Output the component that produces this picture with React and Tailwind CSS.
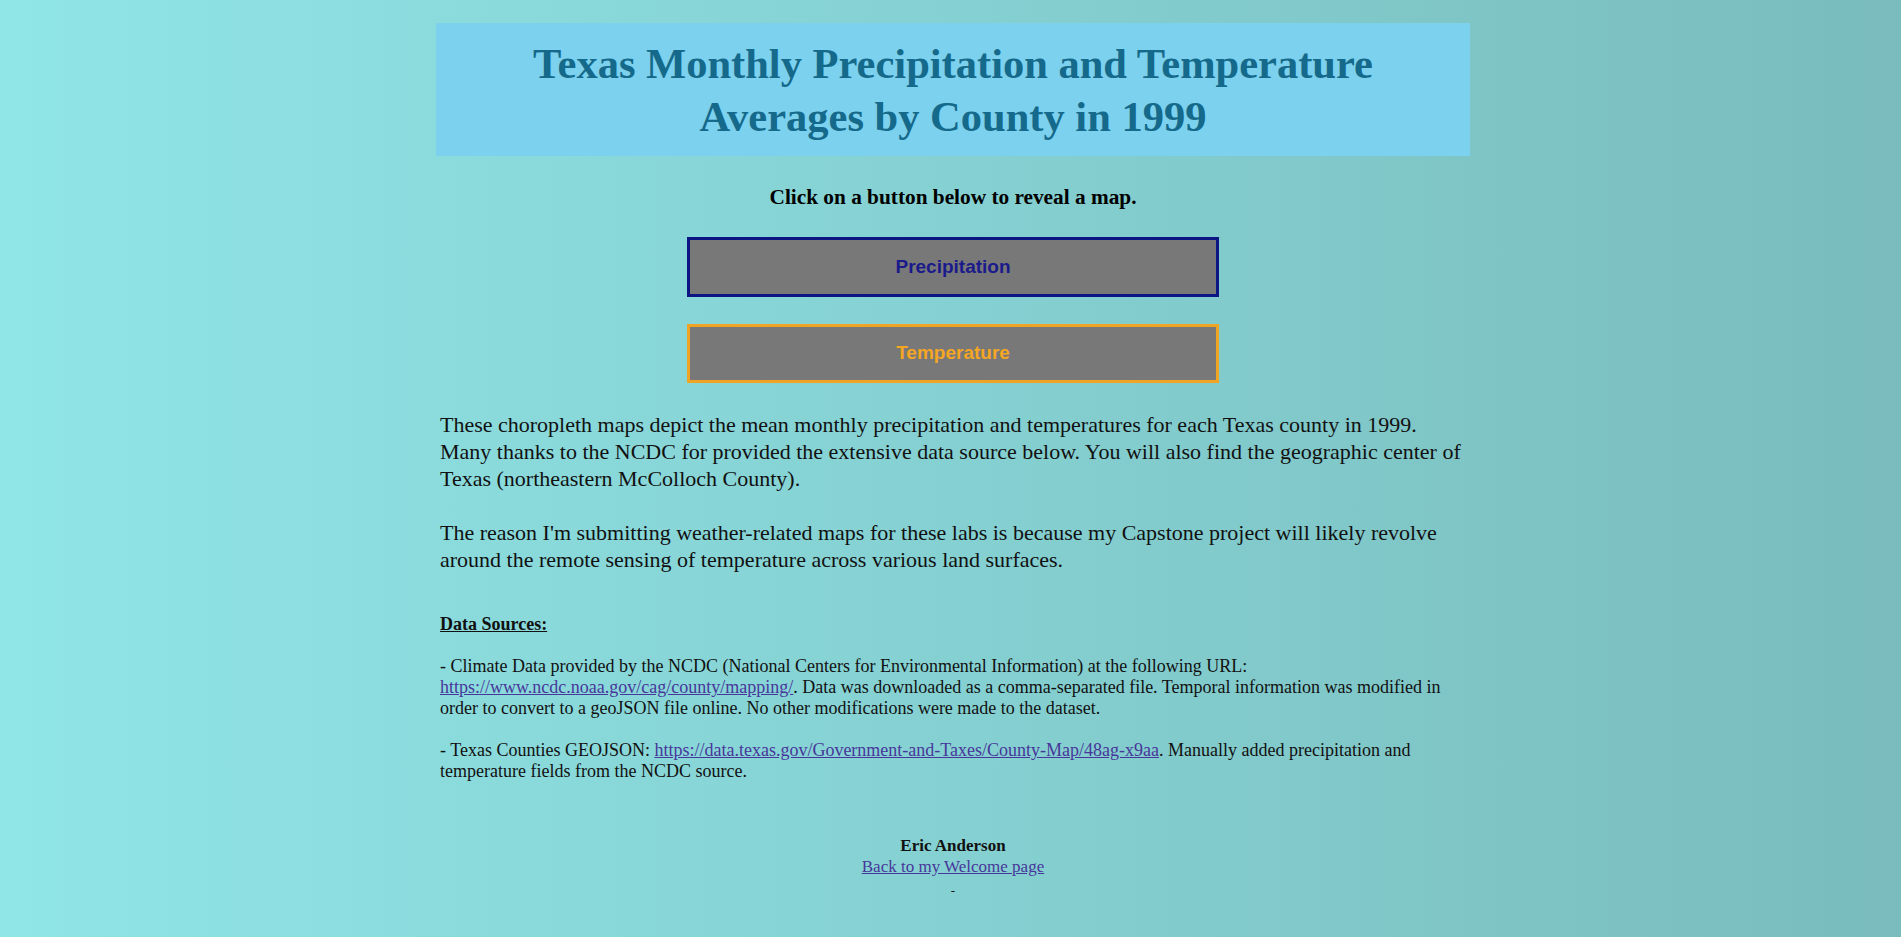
const serif = "font-['Liberation_Serif',_'Times_New_Roman',_serif]";

export default function App() {
  return (
    <div className="min-h-screen bg-linear-to-r from-[#90e5e7] to-[#7abcbd] pt-[23px] pb-10">
      <div className="ml-[436px] w-[1034px]">
        <header className="flex h-[133px] items-center justify-center bg-[#7bd1ee]">
          <h1 className={`${serif} text-center text-[42.5px] font-bold leading-[53px] text-[#15698a]`}>
            Texas Monthly Precipitation and Temperature
            <br />
            Averages by County in 1999
          </h1>
        </header>

        <p className={`${serif} mt-[28px] text-center text-[21.3px] font-bold leading-[27px] text-black`}>
          Click on a button below to reveal a map.
        </p>

        <div className="mt-[26px] flex flex-col items-center gap-[27px]">
          <button
            type="button"
            className="h-[60px] w-[532px] border-[3px] border-[#0b1682] bg-[#787878] font-['Liberation_Sans',_Arial,_sans-serif] text-[19px] font-bold text-[#1a1a8a]"
          >
            Precipitation
          </button>
          <button
            type="button"
            className="h-[59px] w-[532px] border-[3px] border-[#f0a424] bg-[#787878] font-['Liberation_Sans',_Arial,_sans-serif] text-[19px] font-bold text-[#f5a623]"
          >
            Temperature
          </button>
        </div>

        <div className="px-1">
          <p className={`${serif} mt-[28px] text-[22px] leading-[27px] text-[#111]`}>
            These choropleth maps depict the mean monthly precipitation and temperatures for each Texas county in 1999.
            <br />
            Many thanks to the NCDC for provided the extensive data source below. You will also find the geographic center of
            <br />
            Texas (northeastern McColloch County).
            <br />
            <br />
            The reason I'm submitting weather-related maps for these labs is because my Capstone project will likely revolve
            <br />
            around the remote sensing of temperature across various land surfaces.
          </p>

          <div className={`${serif} mt-[41px] text-[18px] leading-[21px] text-[#111]`}>
            <p className="font-bold underline">Data Sources:</p>
            <br />
            <p>
              - Climate Data provided by the NCDC (National Centers for Environmental Information) at the following URL:
              <br />
              <a href="#" className="text-[#47379a] underline">
                https://www.ncdc.noaa.gov/cag/county/mapping/
              </a>
              . Data was downloaded as a comma-separated file. Temporal information was modified in
              <br />
              order to convert to a geoJSON file online. No other modifications were made to the dataset.
            </p>
            <br />
            <p>
              - Texas Counties GEOJSON:{" "}
              <a href="#" className="text-[#47379a] underline">
                https://data.texas.gov/Government-and-Taxes/County-Map/48ag-x9aa
              </a>
              . Manually added precipitation and
              <br />
              temperature fields from the NCDC source.
            </p>
          </div>
        </div>

        <footer className={`${serif} mt-[53px] text-center text-[17px] leading-[21px] text-[#111]`}>
          <p className="font-bold">Eric Anderson</p>
          <a href="#" className="text-[#47379a] underline">
            Back to my Welcome page
          </a>
          <p className="mt-[3px] text-[13px]">-</p>
        </footer>
      </div>
    </div>
  );
}
